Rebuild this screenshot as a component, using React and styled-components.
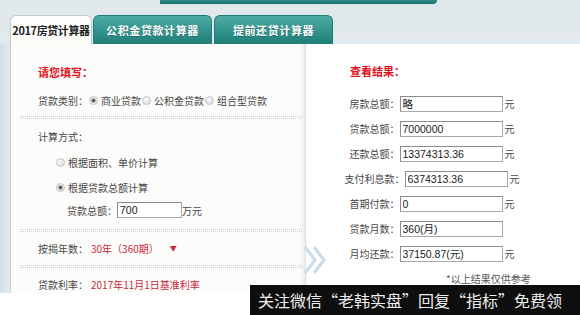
import React from 'react'
import styled, { createGlobalStyle } from 'styled-components'

const FONT = '"Noto Sans CJK SC", "Noto Sans", sans-serif'
const NUM_FONT = '"Liberation Sans", "Noto Sans CJK SC", sans-serif'
const TEAL_TOP = '#4eaca6'
const TEAL_BOTTOM = '#1f7d78'
const RED = '#c9283e'
const LABEL = '#474747'

const GlobalStyle = createGlobalStyle`
  html, body {
    margin: 0;
    padding: 0;
    background: #fff;
  }
  body {
    font-family: ${FONT};
  }
`

const Page = styled.div`
  position: relative;
  width: 580px;
  height: 315px;
  overflow: hidden;
  background: linear-gradient(180deg, #e1e8ec 0, #ebf0f2 290px, #fff 293px);
`

const TopStrip = styled.div`
  margin-left: 160px;
  width: 277px;
  height: 4px;
  background: linear-gradient(180deg, #2c8c85, #1b6f6a);
  border-bottom-right-radius: 6px;
`

const TabBar = styled.div`
  display: flex;
  align-items: flex-end;
  margin-top: 11px;
  padding-left: 10px;
  height: 29px;
`

const Tab = styled.div`
  box-sizing: border-box;
  width: ${(p) => p.$width}px;
  height: 29px;
  margin-left: ${(p) => p.$gap || 0}px;
  display: flex;
  align-items: center;
  justify-content: center;
  font-size: 11px;
  font-weight: 700;
  white-space: nowrap;
  border-radius: 6px 6px 0 0;
  color: ${(p) => (p.$active ? '#222' : '#fff')};
  background: ${(p) =>
    p.$active
      ? 'linear-gradient(180deg, #ffffff, #fbfbf8)'
      : `linear-gradient(180deg, ${TEAL_TOP}, ${TEAL_BOTTOM})`};
  border: 1px solid ${(p) => (p.$active ? '#bccaca' : '#1f7a75')};
  border-bottom: none;
  text-shadow: ${(p) => (p.$active ? 'none' : '0 1px 0 rgba(0,0,0,0.25)')};
  letter-spacing: ${(p) => (p.$active ? '-0.4px' : '0.6px')};
`

const Body = styled.div`
  display: flex;
  height: 249px;
  overflow: hidden;
  background: linear-gradient(90deg, #d3dfe7, #e3eaee 10px, transparent 10px);
`

const LeftPanel = styled.div`
  box-sizing: border-box;
  width: 295px;
  margin-left: 10px;
  display: flex;
  flex-direction: column;
  background: #fcfcfa;
  border-left: 1px solid #c6d2d5;
  box-shadow: inset -5px 0 5px -4px rgba(0, 0, 0, 0.12);
`

const RightPanel = styled.div`
  flex: 1;
  display: flex;
  flex-direction: column;
  background: #fff;
  border-left: 1px solid #dde2de;
  padding-right: 22px;
`

const Heading = styled.div`
  height: 16px;
  margin-top: ${(p) => p.$top}px;
  margin-left: ${(p) => p.$left}px;
  display: flex;
  align-items: center;
  font-size: 11px;
  font-weight: 700;
  color: #e0101c;
`

const Row = styled.div`
  height: 18px;
  margin-top: ${(p) => p.$top}px;
  padding-left: ${(p) => p.$indent}px;
  display: flex;
  align-items: center;
  font-size: 10px;
  color: ${LABEL};
  white-space: nowrap;
`

const Dots = styled.div`
  height: 1px;
  margin: ${(p) => p.$top}px 3px 0 9px;
  border-top: 1px dotted #cfcfcf;
  border-bottom: 1px dotted #d6d6d6;
`

const Radio = styled.span`
  box-sizing: border-box;
  width: 9px;
  height: 9px;
  margin: 0 3px 0 1px;
  border-radius: 50%;
  border: 1px solid #c3c3c3;
  background: ${(p) =>
    p.$checked
      ? 'radial-gradient(circle, #555 0, #666 1.6px, #e8e8e8 2.4px, #f4f4f4 100%)'
      : 'radial-gradient(circle at 40% 35%, #fafafa, #d8d8d8)'};
  flex-shrink: 0;
`

const Value = styled.span`
  color: ${RED};
  margin-left: 3px;
`

const Caret = styled.span`
  color: ${RED};
  font-size: 7px;
  margin-left: 11px;
`

const Field = styled.input`
  box-sizing: border-box;
  width: ${(p) => p.$width}px;
  height: 16px;
  margin: 0;
  padding: 0 2px;
  border: 1px solid #a9a9a9;
  border-top-color: #8c8c8c;
  border-left-color: #8c8c8c;
  background: #fff;
  font-family: ${NUM_FONT};
  font-size: 10.5px;
  color: #1a1a1a;
  outline: none;
`

const Unit = styled.span`
  margin-left: 2px;
  color: ${LABEL};
  visibility: ${(p) => (p.$hidden ? 'hidden' : 'visible')};
`

const ResultRow = styled.div`
  height: 25px;
  display: flex;
  align-items: center;
  justify-content: center;
  font-size: 10px;
  color: ${LABEL};
  white-space: nowrap;
`

const ResultList = styled.div`
  margin-top: 12px;
  display: flex;
  flex-direction: column;
`

const Note = styled.div`
  margin-top: 4px;
  height: 16px;
  padding-left: 140px;
  display: flex;
  align-items: center;
  font-size: 10px;
  color: #555;
`

const Chevron = styled.svg`
  position: absolute;
  left: 303px;
  top: 245px;
`

const Watermark = styled.div`
  position: absolute;
  left: 250px;
  top: 285px;
  right: 0;
  bottom: 0;
  padding-left: 8px;
  display: flex;
  align-items: center;
  background: #0e0e0e;
  color: #eeeeee;
  font-size: 16px;
  white-space: nowrap;
`

const results = [
  { label: '房款总额：', value: '略' },
  { label: '贷款总额：', value: '7000000' },
  { label: '还款总额：', value: '13374313.36' },
  { label: '支付利息款：', value: '6374313.36' },
  { label: '首期付款：', value: '0' },
  { label: '贷款月数：', value: '360(月)', noUnit: true },
  { label: '月均还款：', value: '37150.87(元)' },
]

const App = () => (
  <Page>
    <GlobalStyle />
    <TopStrip />
    <TabBar>
      <Tab $active $width={82}>2017房贷计算器</Tab>
      <Tab $width={119} $gap={1}>公积金贷款计算器</Tab>
      <Tab $width={119} $gap={2}>提前还贷计算器</Tab>
    </TabBar>
    <Body>
      <LeftPanel>
        <Heading $top={20} $left={27}>请您填写：</Heading>
        <Row $top={12} $indent={27}>
          贷款类别：<Radio $checked />商业贷款<Radio />公积金贷款<Radio />组合型贷款
        </Row>
        <Dots $top={7} />
        <Row $top={9} $indent={27}>计算方式：</Row>
        <Row $top={9} $indent={44}>
          <Radio />根据面积、单价计算
        </Row>
        <Row $top={7} $indent={44}>
          <Radio $checked />根据贷款总额计算
        </Row>
        <Row $top={6} $indent={56}>
          贷款总额：<Field $width={65} readOnly value="700" />万元
        </Row>
        <Dots $top={10} />
        <Row $top={8} $indent={27}>
          按揭年数：<Value>30年（360期）</Value>
          <Caret>▼</Caret>
        </Row>
        <Dots $top={8} />
        <Row $top={8} $indent={27}>
          贷款利率：<Value>2017年11月1日基准利率</Value>
        </Row>
      </LeftPanel>
      <RightPanel>
        <Heading $top={19} $left={44}>查看结果：</Heading>
        <ResultList>
          {results.map((r) => (
            <ResultRow key={r.label}>
              {r.label}
              <Field $width={103} readOnly value={r.value} />
              <Unit $hidden={r.noUnit}>元</Unit>
            </ResultRow>
          ))}
        </ResultList>
        <Note>*以上结果仅供参考</Note>
      </RightPanel>
    </Body>
    <Chevron width="26" height="30" viewBox="0 0 26 30">
      <polyline points="2,2 12,15 2,28" fill="none" stroke="#c8dde9" strokeWidth="3" />
      <polyline points="11,2 21,15 11,28" fill="none" stroke="#c8dde9" strokeWidth="3" />
    </Chevron>
    <Watermark>关注微信“老韩实盘”回复“指标”免费领</Watermark>
  </Page>
)

export default App
